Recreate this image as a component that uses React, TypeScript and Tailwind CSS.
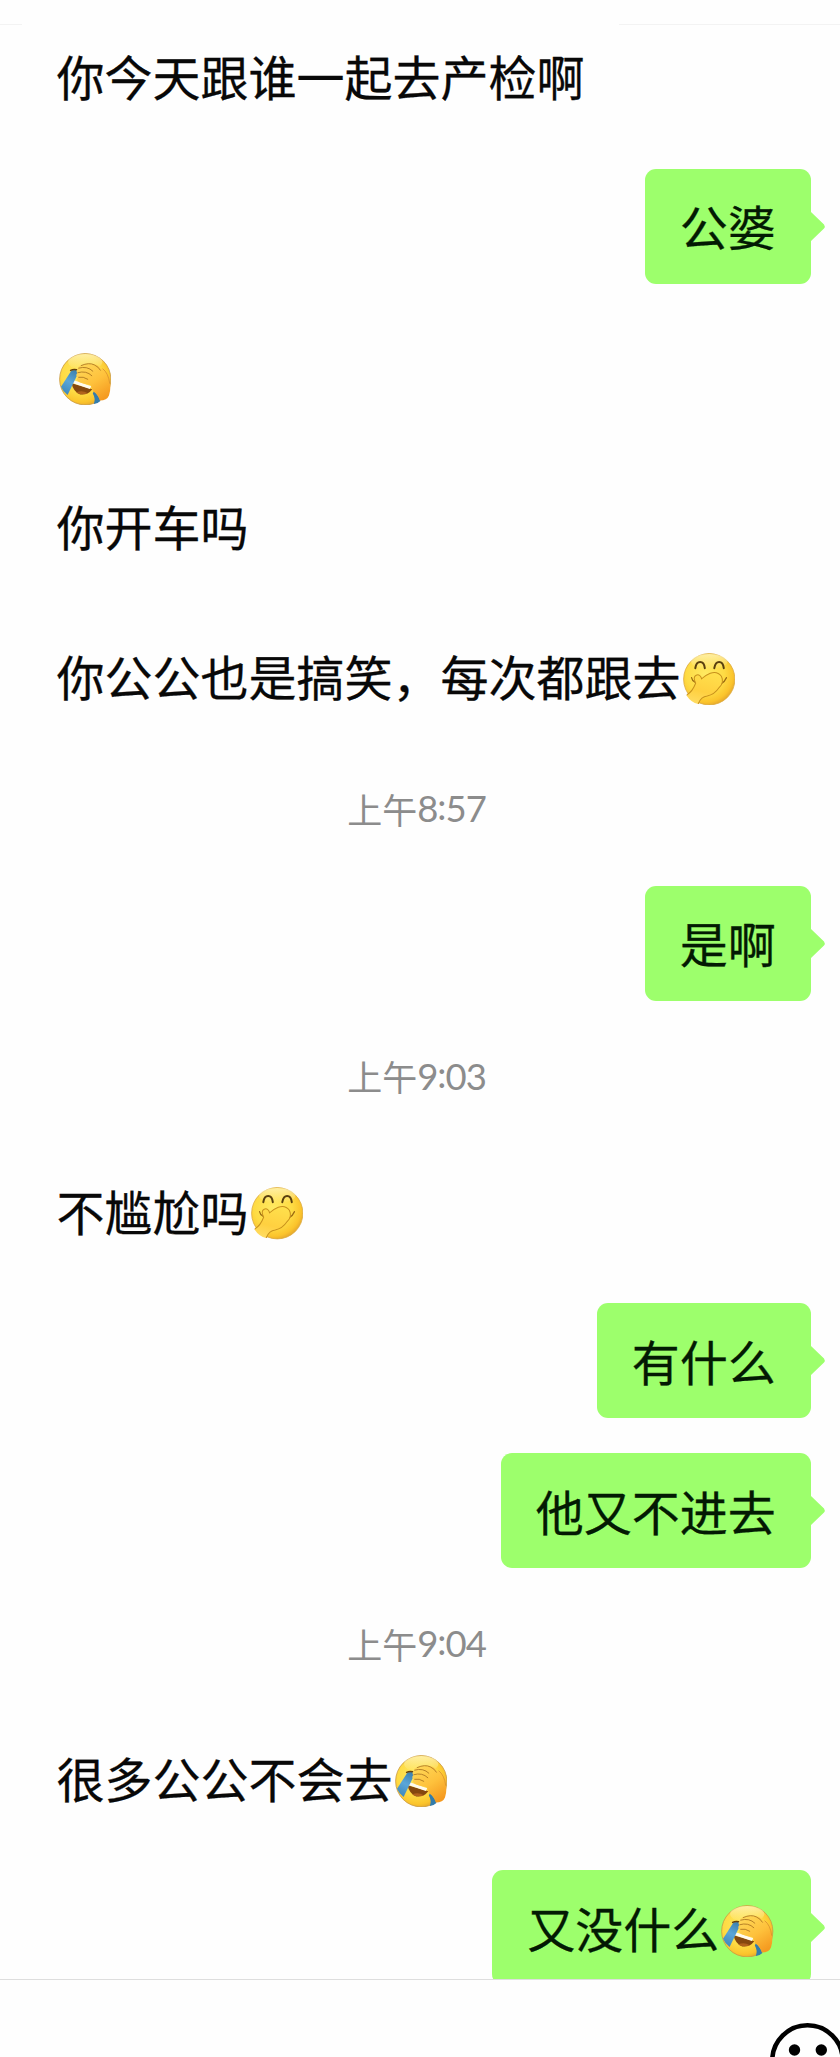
import clsx from "clsx";

type EmojiName = "facepalm" | "giggle";

type Item =
  | { type: "time"; clock: [string, string] }
  | { type: "msg"; mine?: boolean; text?: string; emoji?: EmojiName };

const items: Item[] = [
  { type: "msg", text: "你今天跟谁一起去产检啊" },
  { type: "msg", mine: true, text: "公婆" },
  { type: "msg", emoji: "facepalm" },
  { type: "msg", text: "你开车吗" },
  { type: "msg", text: "你公公也是搞笑，每次都跟去", emoji: "giggle" },
  { type: "time", clock: ["8", "57"] },
  { type: "msg", mine: true, text: "是啊" },
  { type: "time", clock: ["9", "03"] },
  { type: "msg", text: "不尴尬吗", emoji: "giggle" },
  { type: "msg", mine: true, text: "有什么" },
  { type: "msg", mine: true, text: "他又不进去" },
  { type: "time", clock: ["9", "04"] },
  { type: "msg", text: "很多公公不会去", emoji: "facepalm" },
  { type: "msg", mine: true, text: "又没什么", emoji: "facepalm" },
];

function EmojiDefs() {
  return (
    <svg className="absolute h-0 w-0" aria-hidden="true">
      <defs>
        <radialGradient id="face" cx="0.42" cy="0.4" r="0.62">
          <stop offset="0" stopColor="#ffea62" />
          <stop offset="0.6" stopColor="#fedb44" />
          <stop offset="0.88" stopColor="#fbc42c" />
          <stop offset="1" stopColor="#e8ab2c" />
        </radialGradient>
        <linearGradient id="shine" x1="0" y1="0" x2="0" y2="1">
          <stop offset="0" stopColor="#fff6c4" stopOpacity="0.75" />
          <stop offset="1" stopColor="#fff6c4" stopOpacity="0" />
        </linearGradient>
        <linearGradient id="palm" x1="0.1" y1="0" x2="0.7" y2="1">
          <stop offset="0" stopColor="#ffd95a" />
          <stop offset="0.55" stopColor="#fec13c" />
          <stop offset="1" stopColor="#f59a20" />
        </linearGradient>
        <linearGradient id="hand" x1="0.6" y1="0" x2="0.3" y2="1">
          <stop offset="0" stopColor="#ffdf4c" />
          <stop offset="0.6" stopColor="#ffd040" />
          <stop offset="1" stopColor="#ffdc62" />
        </linearGradient>
        <linearGradient id="tear" x1="0.7" y1="0" x2="0.3" y2="1">
          <stop offset="0" stopColor="#3c80ad" />
          <stop offset="0.5" stopColor="#5ba6d8" />
          <stop offset="1" stopColor="#3d88bd" />
        </linearGradient>
      </defs>
    </svg>
  );
}

function Facepalm() {
  return (
    <svg viewBox="0 0 52 52" className="h-full w-full">
      <circle cx="26" cy="26" r="25.4" fill="url(#face)" stroke="#c99a45" strokeWidth="0.8" />
      <ellipse cx="26" cy="9" rx="17" ry="8" fill="url(#shine)" />
      <path d="M12.5 30 Q14 38.5 21 41 Q28.5 42 33 36 Z" fill="#85480f" />
      <path d="M14 26.8 L32 33 L30.5 35.6 L13.3 29.6 Z" fill="#fffaf0" />
      <path d="M17 39 Q23 36.5 28.5 39.8 Q23 42.5 17 39Z" fill="#b0621c" />
      <path d="M12.5 17 L20.5 16.5 L18 22 L8.5 41.5 Q4 38.5 2 33.5 Z" fill="url(#tear)" />
      <path d="M11.5 17.2 Q15 15.4 20 17.3" fill="none" stroke="#67420d" strokeWidth="1.5" strokeLinecap="round" />
      <path d="M34.5 38 Q38 40.5 41 47.5 Q38 50.5 34.5 50.5 Q36.5 45 33.5 40 Z" fill="#337cac" />
      <path
        d="M18.5 15.5 Q19 12.5 23 12 Q27 9.5 32 11 Q38 10.5 41 15 Q42 17 43.5 15.5 Q47.5 16.5 50 25 Q52 35 49.5 42 Q47.5 47 40.5 47 Q39 42 34.5 38.5 Q32 35.5 31.5 32 Q24 30.5 20.5 29 Q16 27 18.5 24 Q16 22.5 18 20 Q16.5 17.5 18.5 15.5Z"
        fill="url(#palm)"
      />
      <g fill="none" stroke="#a56d1c" strokeWidth="0.8" strokeLinecap="round">
        <path d="M22 12.4 Q30 9 35 11.8 Q39 13.5 41 17" />
        <path d="M19.5 15 Q28 12.5 33.5 18" />
        <path d="M18.6 19.5 Q27 17 32.5 22.5" />
        <path d="M19.5 24 Q24 23 28.5 26" />
        <path d="M43.5 15.7 Q49 20 50.2 30" stroke="#d8932a" />
      </g>
    </svg>
  );
}

function Giggle() {
  return (
    <svg viewBox="0 0 52 52" className="h-full w-full">
      <circle cx="26" cy="26" r="25.4" fill="url(#face)" stroke="#dcab3e" strokeWidth="0.8" />
      <ellipse cx="26" cy="8.5" rx="18" ry="7.5" fill="url(#shine)" />
      <g fill="none" stroke="#5a400f" strokeWidth="2" strokeLinecap="round">
        <path d="M12.2 15 Q13 8.8 17 8.8 Q21 8.8 21.6 15" />
        <path d="M31 15 Q32 8.8 35.8 8.8 Q39.7 8.8 40.4 15" />
      </g>
      <g fill="none" stroke="#9a6a12" strokeWidth="1.3" strokeLinecap="round">
        <path d="M8.5 24.5 Q9 27.5 12 29" />
        <path d="M43 24.5 Q41.5 28.5 37.5 30.5" />
      </g>
      <path
        d="M3.5 42 Q9.5 38 12.5 30 Q9.5 23.5 13 22 Q17 20.5 18.5 25.5 Q22 22 27 20 Q34 17.5 38 23 Q41 29 36 34 Q31 41.5 24 42.5 Q18 43 15 50.5 Q8 49 3.5 42Z"
        fill="url(#hand)"
      />
      <path
        d="M4 41.5 Q9.5 38 12.5 30 Q9.5 23.5 13 22 Q17 20.5 18.5 25.5 Q22 22 27 20 Q34 17.5 38 23 Q41 29 36 34 Q31 41.5 24 42.5 Q18 43 15.2 50"
        fill="none"
        stroke="#c8911c"
        strokeWidth="1"
        strokeLinecap="round"
      />
    </svg>
  );
}

function Emoji({ name }: { name: EmojiName }) {
  return (
    <span className="ml-0.5 mr-0.5 mt-[6px] block size-[52.5px] shrink-0">
      {name === "facepalm" ? <Facepalm /> : <Giggle />}
    </span>
  );
}

function Message({ mine, text, emoji }: { mine?: boolean; text?: string; emoji?: EmojiName }) {
  return (
    <div className={clsx("flex h-[115px] shrink-0", mine ? "justify-end pr-[29.5px]" : "pl-[56.5px]")}>
      <div
        className={clsx(
          "relative flex items-center whitespace-nowrap text-[48px] leading-none [-webkit-text-stroke:0.3px]",
          mine ? "rounded-[11px] bg-[#9dff6c] px-[34.8px] text-[#031a03]" : "text-[#080808]"
        )}
      >
        {text && <span className="pb-[2px]">{text}</span>}
        {emoji && <Emoji name={emoji} />}
        {mine && (
          <svg viewBox="0 0 16 32" className="absolute left-full top-[42px] -ml-px h-8 w-4">
            <path d="M0 0 L1 1 L14 13.5 Q15.5 15.5 14 17.5 L1 30 L0 31 Z" fill="#9dff6c" />
          </svg>
        )}
      </div>
    </div>
  );
}

function TimeLabel({ clock }: { clock: [string, string] }) {
  return (
    <div className="flex items-center justify-center pb-[2px] pr-[7px] text-[35px] leading-none text-[#8c8c8c]">
      <span>上午</span>
      <span className="font-[Lato] text-[36.5px] tracking-[-1px]">
        {clock[0]}
        <span className="relative -top-[2px]">:</span>
        {clock[1]}
      </span>
    </div>
  );
}

export default function App() {
  return (
    <div className="flex h-[2057px] w-[840px] flex-col overflow-hidden bg-[#fefefe] font-['Noto_Sans_CJK_SC',sans-serif]">
      <EmojiDefs />
      <div className="relative h-[1979px] shrink-0 overflow-hidden">
        {/* remains of the header border, behind the first message */}
        <div className="absolute inset-x-0 top-6 flex justify-between">
          <div className="h-px w-[22px] bg-[#f3f3f3]" />
          <div className="h-px w-[221px] bg-[#f3f3f3]" />
        </div>
        <div className="flex flex-col gap-[35px] pt-[18.5px]">
          {items.map((item, i) =>
            item.type === "time" ? (
              <div key={i} className="flex h-[82.3px] shrink-0 flex-col justify-center">
                <TimeLabel clock={item.clock} />
              </div>
            ) : (
              <Message key={i} mine={item.mine} text={item.text} emoji={item.emoji} />
            )
          )}
        </div>
      </div>
      <div className="flex flex-1 justify-end overflow-hidden border-t border-[#dedede]">
        <svg viewBox="0 0 75 75" className="-mr-[5px] mt-[43px] size-[75px] shrink-0">
          <circle cx="37.5" cy="37.5" r="35.2" fill="none" stroke="#000" strokeWidth="4.6" />
          <circle cx="24.5" cy="27" r="5.7" />
          <circle cx="51.3" cy="27" r="5.7" />
        </svg>
      </div>
    </div>
  );
}
